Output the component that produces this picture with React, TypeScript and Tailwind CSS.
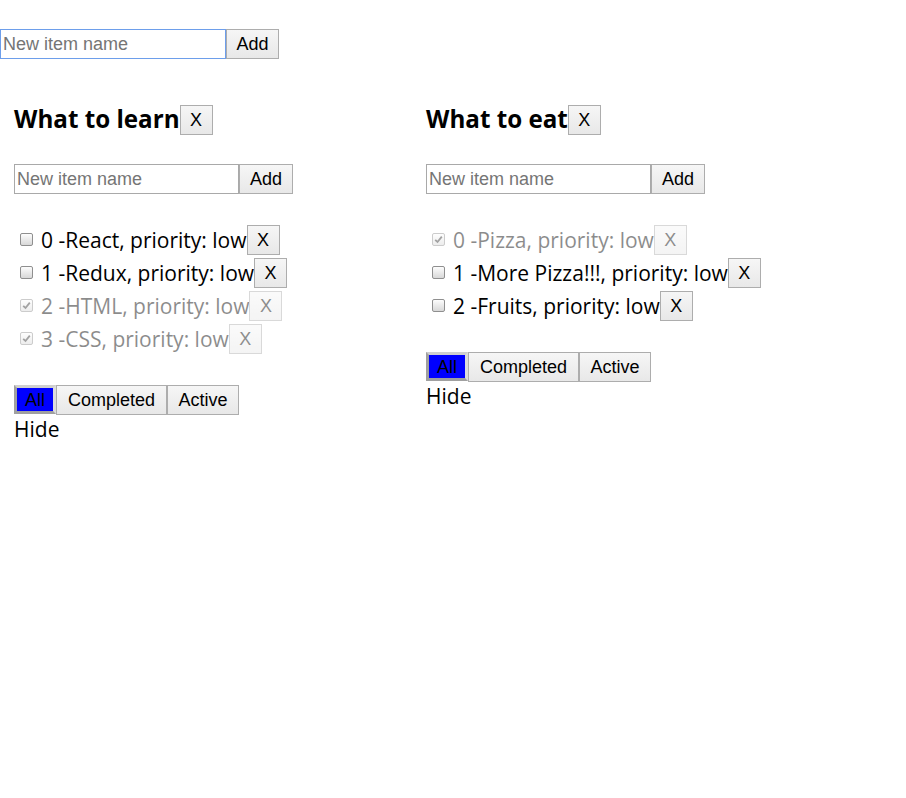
import type { ReactNode } from "react";

type Item = { id: number; title: string; done: boolean };

const learn: Item[] = [
  { id: 0, title: "React", done: false },
  { id: 1, title: "Redux", done: false },
  { id: 2, title: "HTML", done: true },
  { id: 3, title: "CSS", done: true },
];

const eat: Item[] = [
  { id: 0, title: "Pizza", done: true },
  { id: 1, title: "More Pizza!!!", done: false },
  { id: 2, title: "Fruits", done: false },
];

const sans = "font-['Open_Sans',sans-serif]";
const arial = "font-['Liberation_Sans',Arial,sans-serif]";

function Btn({ children, className = "" }: { children: ReactNode; className?: string }) {
  return (
    <button
      className={`${arial} flex h-[30px] items-center justify-center border border-[#adadad] bg-gradient-to-b from-[#f6f6f6] to-[#e8e8e8] text-[18px] leading-none text-black ${className}`}
    >
      {children}
    </button>
  );
}

function AddForm({ focused = false, inputW, btnW }: { focused?: boolean; inputW: string; btnW: string }) {
  return (
    <div className="flex h-[30px]">
      <input
        placeholder="New item name"
        className={`${arial} h-[30px] ${inputW} border bg-white px-[2px] text-[18px] text-black outline-none placeholder:text-[#757575] ${
          focused ? "border-[#6d9eeb]" : "border-[#a9a9a9]"
        }`}
      />
      <Btn className={btnW}>Add</Btn>
    </div>
  );
}

function Check({ checked }: { checked: boolean }) {
  return (
    <span className="ml-[6px] mr-[8px] flex h-[13px] w-[13px] shrink-0 items-center justify-center rounded-[2px] border border-[#8f8f8f] bg-gradient-to-b from-[#fdfdfd] to-[#d8d8d8]">
      {checked && (
        <svg width="9" height="9" viewBox="0 0 9 9">
          <path d="M1.2 4.8 L3.5 7 L7.8 1.6" fill="none" stroke="#333" strokeWidth="1.8" />
        </svg>
      )}
    </span>
  );
}

function Todolist({ title, items }: { title: string; items: Item[] }) {
  return (
    <div className="w-[412px] pl-[14px]">
      <div className="mt-[46px] flex h-[29px] items-center">
        <h3 className={`${sans} text-[24.2px] font-bold leading-none text-black`}>{title}</h3>
        <Btn className="h-[29px] w-[33px]">X</Btn>
      </div>
      <div className="mt-[30px]">
        <AddForm inputW="w-[225px]" btnW="w-[54px]" />
      </div>
      <ul className="mt-[29px]">
        {items.map((it) => (
          <li key={it.id} className={`flex h-[33px] items-center ${it.done ? "opacity-45" : ""}`}>
            <Check checked={it.done} />
            <span className={`${sans} text-[21px] leading-[28px] text-black`}>
              {it.id} -{it.title}, priority: low
            </span>
            <Btn className="w-[33px]">X</Btn>
          </li>
        ))}
      </ul>
      <div className="mt-[30px] flex">
        <button
          className={`${arial} flex h-[29px] w-[42px] items-center justify-center border-[3px] border-t-[#cfcfcf] border-l-[#a0a0a0] border-b-[#a0a0a0] border-r-[#dcdcdc] bg-[#0000ff] text-[18px] leading-none text-black`}
        >
          All
        </button>
        <Btn className="h-[29px] w-[111px]">Completed</Btn>
        <Btn className="h-[29px] w-[72px]">Active</Btn>
      </div>
      <div className={`${sans} text-[21px] leading-[28px] text-black`}>Hide</div>
    </div>
  );
}

export default function App() {
  return (
    <div className="min-h-[798px] bg-white pt-[29px]">
      <AddForm focused inputW="w-[226px]" btnW="w-[53px]" />
      <div className="flex">
        <Todolist title="What to learn" items={learn} />
        <Todolist title="What to eat" items={eat} />
      </div>
    </div>
  );
}
